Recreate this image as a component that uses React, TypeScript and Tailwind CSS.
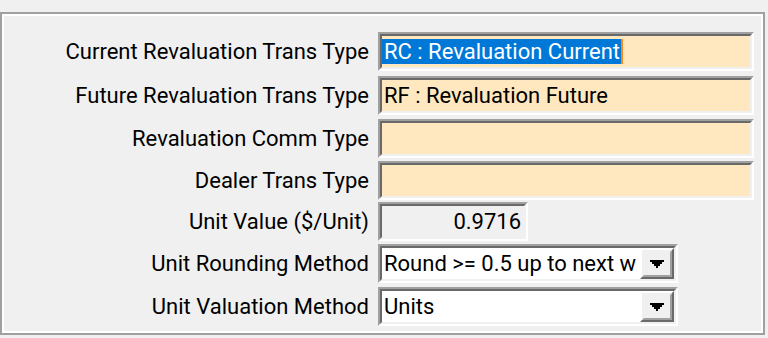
import React from 'react'

const font = { fontFamily: 'Roboto, "Liberation Sans", Arial, sans-serif' }

const Sunken = ({ className, children }: { className: string; children?: React.ReactNode }) => (
  <div className={`border-2 border-t-[#a0a0a0] border-l-[#a0a0a0] border-b-white border-r-white ${className}`}>
    <div className="h-full border-2 border-t-[#696969] border-l-[#696969] border-b-transparent border-r-transparent">
      {children}
    </div>
  </div>
)

const Arrow = () => (
  <svg width="14" height="8" viewBox="0 0 14 8" shapeRendering="crispEdges">
    <path d="M0 0h14v2H0z M2 2h10v2H2z M4 4h6v2H4z M6 6h2v2H6z" fill="#000" />
  </svg>
)

const Combo = ({ value }: { value: string }) => (
  <Sunken className="w-[300px] h-[39px]">
    <div className="flex h-full bg-white">
      <div className="flex-1 overflow-hidden whitespace-nowrap pl-[2px] leading-[31px]">{value}</div>
      <div className="w-[34px] h-full border-2 border-t-white border-l-white border-b-[#696969] border-r-[#696969]">
        <div className="h-full flex items-center justify-center bg-[#f0f0f0] border-2 border-t-[#f0f0f0] border-l-[#f0f0f0] border-b-[#a0a0a0] border-r-[#a0a0a0]">
          <Arrow />
        </div>
      </div>
    </div>
  </Sunken>
)

const Row = ({ label, mt, children }: { label: string; mt: string; children: React.ReactNode }) => (
  <div className={`flex items-center h-[39px] ${mt}`}>
    <div className="w-[366px] pr-[1px] text-right whitespace-nowrap">{label}</div>
    <div className="ml-[8px]">{children}</div>
  </div>
)

export default function App() {
  return (
    <div className="w-[768px] h-[338px] bg-[#f0f0f0] pt-[12px] text-[22px] text-black" style={font}>
      <div className="w-[765px] h-[323px] border-2 border-[#a0a0a0]">
        <div className="h-full border-2 border-white pt-[16px]">
          <Row label="Current Revaluation Trans Type" mt="mt-0">
            <Sunken className="w-[376px] h-[39px]">
              <div className="h-full bg-[#ffe8bf] flex items-center pl-0">
                <span className="h-[25px] leading-[25px] bg-[#0078d7] text-white pl-[2px] pr-[1px]">RC : Revaluation Current</span>
                <span className="w-[2px] h-[25px] bg-[#ff8718]" />
              </div>
            </Sunken>
          </Row>
          <Row label="Future Revaluation Trans Type" mt="mt-[5px]">
            <Sunken className="w-[376px] h-[39px]">
              <div className="h-full bg-[#ffe8bf] pl-[2px] leading-[31px]">RF : Revaluation Future</div>
            </Sunken>
          </Row>
          <Row label="Revaluation Comm Type" mt="mt-[4px]">
            <Sunken className="w-[376px] h-[39px]">
              <div className="h-full bg-[#ffe8bf]" />
            </Sunken>
          </Row>
          <Row label="Dealer Trans Type" mt="mt-[3px]">
            <Sunken className="w-[376px] h-[39px]">
              <div className="h-full bg-[#ffe8bf]" />
            </Sunken>
          </Row>
          <Row label="Unit Value ($/Unit)" mt="mt-[2px]">
            <Sunken className="w-[150px] h-[39px]">
              <div className="h-full bg-[#f0f0f0] text-right pr-[3px] leading-[31px]">0.9716</div>
            </Sunken>
          </Row>
          <Row label="Unit Rounding Method" mt="mt-[3px]">
            <Combo value="Round >= 0.5 up to next w" />
          </Row>
          <Row label="Unit Valuation Method" mt="mt-[4px]">
            <Combo value="Units" />
          </Row>
        </div>
      </div>
    </div>
  )
}
